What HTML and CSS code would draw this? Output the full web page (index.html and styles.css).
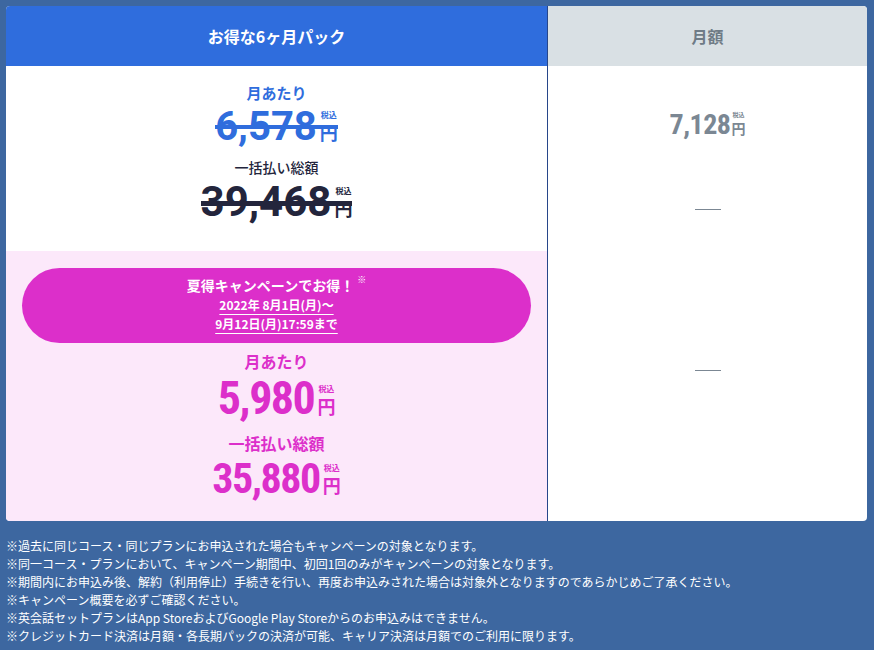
FILE: index.html
```html
<!DOCTYPE html>
<html lang="ja">
<head>
<meta charset="utf-8">
<title>料金プラン</title>
<link rel="stylesheet" href="styles.css">
</head>
<body>
<div class="plans">
  <div class="col col-pack">
    <div class="head head-pack">お得な6ヶ月パック</div>
    <div class="regular">
      <p class="label label-blue">月あたり</p>
      <div class="price-row price-a">
        <span class="price price-strike price-blue"><span class="num">6,578</span><span class="unit"><span class="tax">税込</span><span class="yen">円</span></span></span>
      </div>
      <p class="label label-dark">一括払い総額</p>
      <div class="price-row price-b">
        <span class="price price-strike price-dark"><span class="num">39,468</span><span class="unit"><span class="tax">税込</span><span class="yen">円</span></span></span>
      </div>
    </div>
    <div class="campaign">
      <div class="pill">
        <p class="pill-title">夏得キャンペーンでお得！<span class="mark">※</span></p>
        <p class="pill-date"><span>2022年 8月1日(月)〜</span></p>
        <p class="pill-date"><span>9月12日(月)17:59まで</span></p>
      </div>
      <p class="label label-pink">月あたり</p>
      <div class="price-row cond price-c">
        <span class="price price-pink"><span class="num">5,980</span><span class="unit"><span class="tax">税込</span><span class="yen">円</span></span></span>
      </div>
      <p class="label label-pink label-pink-2">一括払い総額</p>
      <div class="price-row cond price-d">
        <span class="price price-pink"><span class="num">35,880</span><span class="unit"><span class="tax">税込</span><span class="yen">円</span></span></span>
      </div>
    </div>
  </div>
  <div class="col col-monthly">
    <div class="head head-monthly">月額</div>
    <div class="monthly-body">
      <div class="price-row cond price-e">
        <span class="price price-gray"><span class="num">7,128</span><span class="unit unit-small"><span class="tax">税込</span><span class="yen">円</span></span></span>
      </div>
      <span class="dash dash-1"></span>
      <span class="dash dash-2"></span>
    </div>
  </div>
</div>
<ul class="notes">
  <li>※過去に同じコース・同じプランにお申込された場合もキャンペーンの対象となります。</li>
  <li>※同一コース・プランにおいて、キャンペーン期間中、初回1回のみがキャンペーンの対象となります。</li>
  <li>※期間内にお申込み後、解約（利用停止）手続きを行い、再度お申込みされた場合は対象外となりますのであらかじめご了承ください。</li>
  <li>※キャンペーン概要を必ずご確認ください。</li>
  <li>※英会話セットプランはApp StoreおよびGoogle Play Storeからのお申込みはできません。</li>
  <li>※クレジットカード決済は月額・各長期パックの決済が可能、キャリア決済は月額でのご利用に限ります。</li>
</ul>
</body>
</html>
```

FILE: styles.css
```css
body {
  margin: 0;
  padding: 6px 7px 0 6px;
  background: #3d67a0;
  font-family: "Noto Sans CJK JP", sans-serif;
}

.plans {
  display: flex;
  border-radius: 4px;
  overflow: hidden;
  background: #fff;
}

.col-pack {
  flex: 0 0 541px;
  display: flex;
  flex-direction: column;
}

.col-monthly {
  flex: 1;
  border-left: 1px solid #27468a;
  display: flex;
  flex-direction: column;
}

.head {
  height: 60px;
  display: flex;
  align-items: center;
  justify-content: center;
  font-size: 16px;
  font-weight: 700;
}

.head-pack {
  background: #2f6ddd;
  color: #fff;
}

.head-monthly {
  background: #d9e0e4;
  color: #6f7b86;
}

.regular {
  padding: 17px 0 28px;
  background: #fff;
  text-align: center;
}

.label {
  margin: 0;
  font-weight: 700;
  line-height: 20px;
  text-align: center;
}

.label-blue {
  font-size: 15px;
  color: #2f6ddd;
}

.label-dark {
  font-size: 14px;
  font-weight: 500;
  color: #23253c;
  margin-top: 10px;
}

.label-pink {
  font-size: 16px;
  line-height: 22px;
  color: #dc2fca;
  margin-top: 7px;
}

.label-pink-2 {
  margin-top: 11px;
}

.price-row {
  text-align: center;
  line-height: 1;
  font-family: Roboto, "Noto Sans", sans-serif;
  font-weight: 700;
}

.price-row.cond {
  font-family: "Roboto Condensed", "DejaVu Sans", sans-serif;
  font-stretch: condensed;
}

.price-a { font-size: 40px; margin-top: 4px; }
.price-b { font-size: 42px; margin-top: 4px; }
.price-c { font-size: 46px; margin-top: 3px; letter-spacing: -1.5px; }
.price-d { font-size: 42px; margin-top: 4px; letter-spacing: -1.5px; }
.price-e { font-size: 28px; letter-spacing: -0.5px; }

.price {
  position: relative;
  display: inline-block;
}

.price-blue { color: #2f6ddd; }
.price-dark { color: #23253c; }
.price-pink { color: #dc2fca; }
.price-gray { color: #7b8793; }

.unit {
  display: inline-block;
  margin-left: 3px;
  font-family: "Noto Sans CJK JP", sans-serif;
  font-size: 18px;
  font-weight: 700;
  letter-spacing: 0;
  text-align: center;
}

.tax {
  display: block;
  font-size: 8px;
  line-height: 9px;
}

.yen {
  display: block;
  margin-top: 4px;
  line-height: 18px;
}

.unit-small {
  font-size: 14px;
  margin-left: 1px;
}

.unit-small .tax {
  font-size: 6px;
  line-height: 7px;
}

.unit-small .yen {
  margin-top: 3px;
  line-height: 14px;
}

.price-strike::after {
  content: "";
  position: absolute;
  left: 0;
  right: 0;
  height: 4px;
  background: currentColor;
}

.price-a .price-strike::after { top: 18px; }
.price-b .price-strike::after { top: 20px; height: 5px; }

.campaign {
  flex: 1;
  background: #fce8fa;
  padding: 17px 16px 21px;
}

.pill {
  height: 75px;
  box-sizing: border-box;
  padding-top: 7px;
  border-radius: 38px;
  background: #dc2fca;
  color: #fff;
  text-align: center;
}

.pill-title {
  margin: 0;
  font-size: 14px;
  font-weight: 700;
  line-height: 20px;
}

.mark {
  font-size: 9px;
  line-height: 10px;
  vertical-align: top;
  margin-left: 3px;
}

.pill-date {
  margin: 0;
  font-size: 12px;
  font-weight: 700;
  line-height: 19px;
}

.pill-date span {
  text-decoration: underline;
  text-decoration-thickness: 1px;
  text-underline-offset: 4px;
}

.monthly-body {
  flex: 1;
  display: flex;
  flex-direction: column;
  align-items: center;
  padding-top: 45px;
}

.dash {
  display: block;
  width: 26px;
  height: 1px;
  background: #7b8793;
}

.dash-1 { margin-top: 70px; }
.dash-2 { margin-top: 160px; }

.notes {
  list-style: none;
  margin: 16px 0 0;
  padding: 0;
  color: #fff;
  font-size: 12px;
  line-height: 18px;
}
```
